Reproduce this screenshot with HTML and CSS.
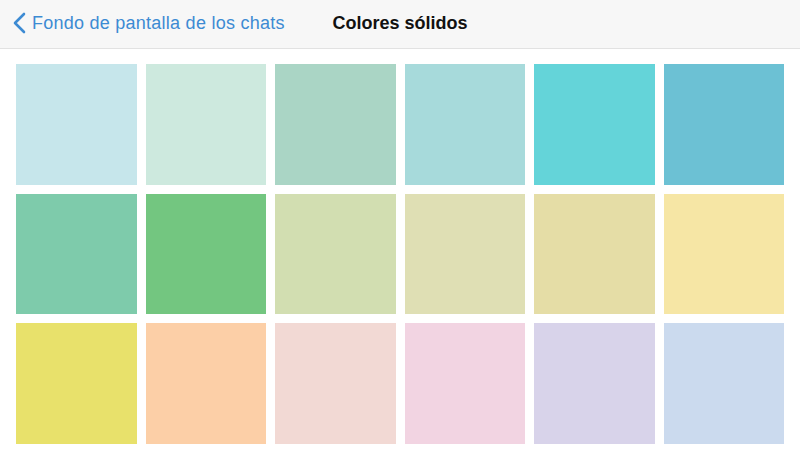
FILE: index.html
```html
<!DOCTYPE html>
<html lang="es">
<head>
    <meta charset="UTF-8">
    <meta name="viewport" content="width=device-width, initial-scale=1.0">
    <title>Colores sólidos</title>
    <link rel="stylesheet" href="styles.css">
</head>
<body>

    <header class="nav-bar">
        <a class="back-link" href="#">
            <svg class="chevron" width="14" height="22" viewBox="0 0 14 22">
                <path d="M12 2 L3 11 L12 20" fill="none" stroke="currentColor" stroke-width="2.6" stroke-linecap="round" stroke-linejoin="round"/>
            </svg>
            <span>Fondo de pantalla de los chats</span>
        </a>
        <h1 class="nav-title">Colores sólidos</h1>
    </header>

    <main class="swatches">
        <div class="swatch c1"></div>
        <div class="swatch c2"></div>
        <div class="swatch c3"></div>
        <div class="swatch c4"></div>
        <div class="swatch c5"></div>
        <div class="swatch c6"></div>

        <div class="swatch c7"></div>
        <div class="swatch c8"></div>
        <div class="swatch c9"></div>
        <div class="swatch c10"></div>
        <div class="swatch c11"></div>
        <div class="swatch c12"></div>

        <div class="swatch c13"></div>
        <div class="swatch c14"></div>
        <div class="swatch c15"></div>
        <div class="swatch c16"></div>
        <div class="swatch c17"></div>
        <div class="swatch c18"></div>
    </main>

</body>
</html>
```

FILE: styles.css
```css
body {
    margin: 0;
    padding: 0;
    background: #ffffff;
    font-family: 'Liberation Sans', Arial, sans-serif;
}

/* Top navigation bar */
.nav-bar {
    position: relative;
    height: 48px;
    background: #f7f7f7;
    border-bottom: 1px solid #e2e2e2;
    display: flex;
    align-items: center;
    justify-content: center;
}

.back-link {
    position: absolute;
    left: 12px;
    top: 0;
    height: 48px;
    display: flex;
    align-items: center;
    gap: 6px;
    color: #3d8bd3;
    text-decoration: none;
    font-size: 18px;
    letter-spacing: 0.25px;
}

.chevron {
    display: block;
    margin-top: -2px;
}

.back-link span {
    margin-top: -2px;
}

.nav-title {
    margin: -2px 0 0;
    font-size: 18px;
    font-weight: 600;
    color: #111;
}

/* Colour grid */
.swatches {
    display: grid;
    grid-template-columns: repeat(6, 1fr);
    gap: 9px;
    padding: 15px 16px 0;
}

.swatch {
    aspect-ratio: 1 / 1;
}

.c1 { background: #c6e6eb; }
.c2 { background: #cde9de; }
.c3 { background: #aad5c5; }
.c4 { background: #a7dadb; }
.c5 { background: #64d4d9; }
.c6 { background: #6cc1d4; }

.c7 { background: #7ecbab; }
.c8 { background: #73c680; }
.c9 { background: #d2deb1; }
.c10 { background: #dfdfb4; }
.c11 { background: #e5dda6; }
.c12 { background: #f6e6a5; }

.c13 { background: #e8e16b; }
.c14 { background: #fccfa7; }
.c15 { background: #f2d9d4; }
.c16 { background: #f2d4e2; }
.c17 { background: #d8d3ea; }
.c18 { background: #cbdaee; }
```
